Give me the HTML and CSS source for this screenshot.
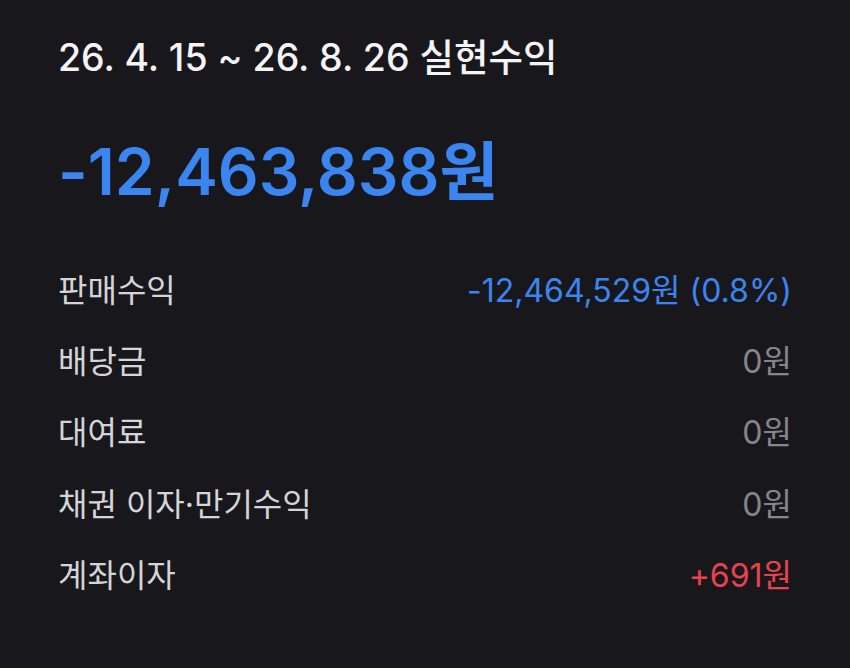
FILE: index.html
```html
<!DOCTYPE html>
<html lang="ko">
<head>
<meta charset="utf-8">
<link rel="stylesheet" href="styles.css">
</head>
<body>
<main class="panel">
  <h1 class="title">26. 4. 15 ~ 26. 8. 26 실현수익</h1>
  <div class="total">-12,463,838원</div>
  <ul class="rows">
    <li class="row"><span class="label">판매수익</span><span class="value blue">-12,464,529원 (0.8%)</span></li>
    <li class="row"><span class="label">배당금</span><span class="value gray">0원</span></li>
    <li class="row"><span class="label">대여료</span><span class="value gray">0원</span></li>
    <li class="row"><span class="label">채권 이자·만기수익</span><span class="value gray">0원</span></li>
    <li class="row"><span class="label">계좌이자</span><span class="value red">+691원</span></li>
  </ul>
</main>
</body>
</html>
```

FILE: styles.css
```css
html, body {
  margin: 0;
  padding: 0;
  background: #18181c;
  width: 850px;
  height: 668px;
  overflow: hidden;
}
body {
  font-family: Inter, "Noto Sans CJK KR", sans-serif;
  color: #f2f2f5;
}
.panel {
  padding: 28px 58px 0 58px;
}
.title {
  margin: 0;
  font-size: 37.5px;
  font-weight: 500;
  line-height: 60px;
  color: #f4f4f6;
}
.total {
  margin-top: 44px;
  font-size: 64px;
  font-weight: 600;
  line-height: 80px;
  color: #3b85f0;
}
.rows {
  list-style: none;
  margin: 40px 0 0 0;
  padding: 0;
  display: flex;
  flex-direction: column;
}
.row {
  display: flex;
  justify-content: space-between;
  align-items: center;
  height: 71.3px;
  font-size: 32px;
}
.label {
  color: #d4d4d9;
}
.value.blue { color: #3b85f0; }
.value.gray { color: #85858c; }
.value.red { color: #e8434f; }
```
